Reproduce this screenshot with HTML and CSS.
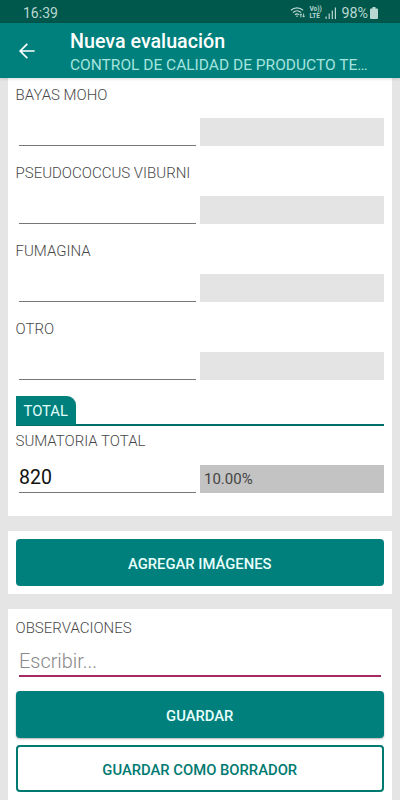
FILE: index.html
```html
<!DOCTYPE html>
<html lang="es">
  <head>
    <meta charset="utf-8" />
    <meta name="viewport" content="width=device-width, initial-scale=1.0" />
    <title>Nueva evaluación</title>
    <link rel="stylesheet" href="styles.css">
  </head>
  <body>
    <div class="status-bar">
      <span class="clock">16:39</span>
      <svg class="wifi" width="16" height="13" viewBox="0 0 16 13" fill="none" stroke="currentColor">
        <path d="M1 4.2C4.2 1 9.8 1 13 4.2M3 6.6C5.3 4.4 8.7 4.4 11 6.6M5 8.8C6.2 7.7 7.6 7.7 8.8 8.8" stroke-width="1.3" />
        <path d="M5.8 9.8h2.4L7 11.3z" fill="currentColor" stroke="none" />
        <path d="M10.8 11.5V8M9.6 9.2l1.2-1.4L12 9.2M13.6 7.5V11M12.4 9.8l1.2 1.4 1.2-1.4" stroke-width="0.9" />
      </svg>
      <span class="volte"><span>Vo))</span><span>LTE</span></span>
      <svg class="signal" width="12" height="12" viewBox="0 0 12 12" fill="currentColor">
        <path d="M0.5 9.5h1.2V12H.5zM3.6 6.5h1.2V12H3.6zM6.7 3.5h1.2V12H6.7zM9.8 0.5h1.2V12H9.8z" />
      </svg>
      <span class="percent">98%</span>
      <svg class="battery" width="8" height="12" viewBox="0 0 8 12" fill="currentColor">
        <path d="M2.5 0h3v1.5H7q1 0 1 1V11q0 1-1 1H1q-1 0-1-1V2.500q0-1 1-1h1.500z" />
      </svg>
    </div>
    <header class="app-bar">
      <svg class="back" width="16" height="16" viewBox="0 0 16 16" fill="none" stroke="#fff" stroke-width="1.7">
        <path d="M15.600 8H1.500M8.300 .9L1.200 8l7.100 7.100" />
      </svg>
      <div class="titles">
        <h1 class="title">Nueva evaluación</h1>
        <div class="sub-title">CONTROL DE CALIDAD DE PRODUCTO TE…</div>
      </div>
    </header>

    <main class="main">
      <section class="card card-fields">
        <div class="field">
          <div class="label">BAYAS MOHO</div>
          <div class="row">
            <div class="input"></div>
            <div class="result"></div>
          </div>
        </div>
        <div class="field">
          <div class="label">PSEUDOCOCCUS VIBURNI</div>
          <div class="row">
            <div class="input"></div>
            <div class="result"></div>
          </div>
        </div>
        <div class="field">
          <div class="label">FUMAGINA</div>
          <div class="row">
            <div class="input"></div>
            <div class="result"></div>
          </div>
        </div>
        <div class="field">
          <div class="label">OTRO</div>
          <div class="row">
            <div class="input"></div>
            <div class="result"></div>
          </div>
        </div>
        <div class="section-title"><span class="tab">TOTAL</span></div>
        <div class="field field-total">
          <div class="label">SUMATORIA TOTAL</div>
          <div class="row">
            <div class="input">820</div>
            <div class="result result-total">10.00%</div>
          </div>
        </div>
      </section>

      <section class="card card-images">
        <button class="btn">AGREGAR IMÁGENES</button>
      </section>

      <section class="card card-notes">
        <div class="label">OBSERVACIONES</div>
        <div class="notes">Escribir...</div>
        <button class="btn btn-save">GUARDAR</button>
        <button class="btn btn-outline">GUARDAR COMO BORRADOR</button>
      </section>
    </main>
  </body>
</html>
```

FILE: styles.css
```css
* {
  box-sizing: border-box;
}
body {
  margin: 0;
  height: 800px;
  overflow: hidden;
  display: flex;
  flex-direction: column;
  background-color: #e5e5e5;
  font-family: Roboto, "Liberation Sans", sans-serif;
}
.status-bar {
  flex: none;
  display: flex;
  align-items: center;
  height: 23px;
  padding: 2px 22px 0 23px;
  background-color: #00574b;
  color: #b9d8d2;
  font-size: 14px;
}
.clock {
  margin-right: auto;
}
.wifi {
  margin-right: 3px;
}
.volte {
  display: flex;
  flex-direction: column;
  width: 13px;
  margin-right: 3px;
  font-size: 6.500px;
  font-weight: 700;
  line-height: 7px;
}
.signal {
  margin-right: 4px;
}
.percent {
  margin-right: 2px;
  font-size: 14.3px;
}
.app-bar {
  flex: none;
  display: flex;
  height: 55px;
  padding-left: 19px;
  background-color: #00807c;
  box-shadow: 0 1px 3px rgba(0, 0, 0, 0.15);
  z-index: 1;
}
.back {
  flex: none;
  margin: 20px 35px 0 0;
}
.titles {
  padding-top: 6px;
}
.title {
  margin: 0;
  color: #fff;
  font-size: 19.7px;
  font-weight: 500;
  line-height: 25px;
}
.sub-title {
  color: #a5e4df;
  font-size: 15.5px;
  line-height: 22px;
  white-space: nowrap;
}
.main {
  flex: 1;
  display: flex;
  flex-direction: column;
  gap: 15px;
  padding: 0 8px;
}
.card {
  flex: none;
  padding: 8px 8px 8px 7.500px;
  background-color: #fff;
}
.card-fields {
  height: 438px;
  padding-top: 6px;
}
.field {
  height: 78px;
}
.label {
  color: #484848;
  font-size: 15px;
  font-weight: 300;
  line-height: 22px;
}
.row {
  display: flex;
  align-items: flex-end;
  gap: 4px;
  height: 40px;
}
.input {
  width: 177px;
  height: 32px;
  margin-left: 3.500px;
  border-bottom: 1px solid #777;
  color: #111;
  font-size: 19.5px;
  line-height: 33px;
}
.result {
  flex: 1;
  height: 28px;
  padding-left: 4px;
  background-color: #e4e4e4;
  color: #444;
  font-size: 15px;
  line-height: 30px;
}
.field-total .label {
  line-height: 20px;
}
.field-total .row {
  height: 42px;
}
.result-total {
  line-height: 29px;
  background-color: #c3c3c3;
}
.section-title {
  display: flex;
  height: 30px;
  margin-bottom: 5px;
  border-bottom: 2px solid #006f69;
}
.tab {
  width: 60px;
  height: 29px;
  padding-left: 8px;
  border-top-right-radius: 9px;
  background-color: #00807c;
  color: #e2fffc;
  font-size: 14.8px;
  line-height: 30px;
}
.btn {
  display: block;
  width: 100%;
  height: 47px;
  padding: 2px 0 0;
  border: 0;
  border-radius: 4px;
  background-color: #00807c;
  color: #e8fffd;
  font-family: inherit;
  font-size: 14.8px;
  font-weight: 500;
}
.card-notes {
  height: 200px;
}
.notes {
  height: 38px;
  margin: 0 3px 14px 3.500px;
  border-bottom: 2px solid #a72a60;
  color: #888;
  font-size: 19.9px;
  font-weight: 300;
  line-height: 45px;
}
.btn-save {
  margin-bottom: 7px;
  box-shadow: 0 1px 2px rgba(0, 0, 0, 0.3);
}
.btn-outline {
  border: 2px solid #007a71;
  background-color: #fff;
  color: #007a71;
}
```
